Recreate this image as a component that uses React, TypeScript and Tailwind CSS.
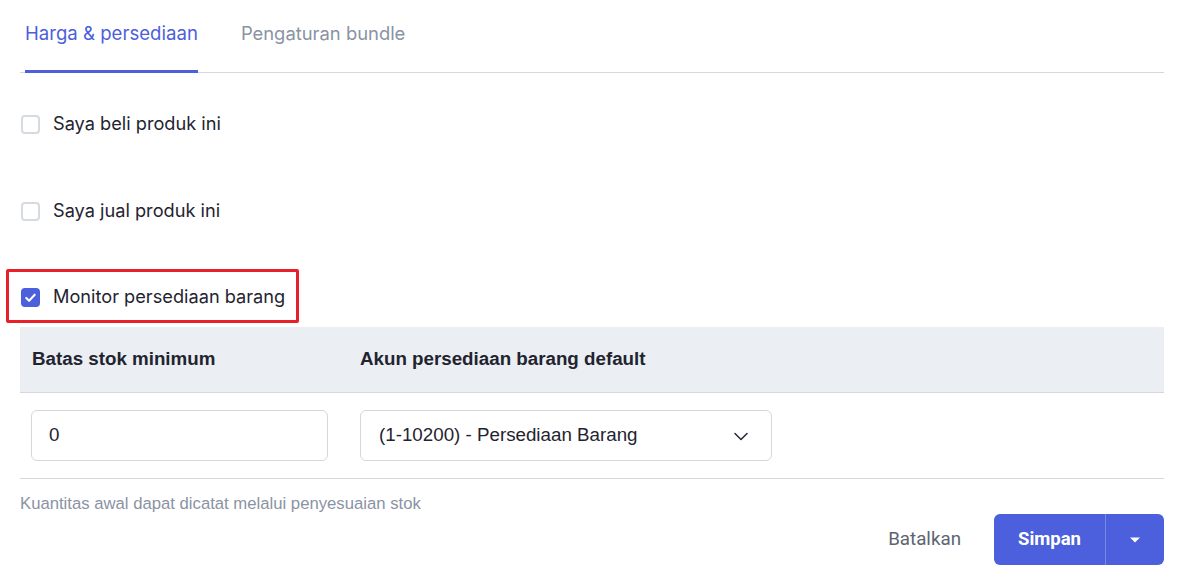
import React from "react";

const roboto = { fontFamily: "Roboto, 'Liberation Sans', Arial, sans-serif" };
const inter = { fontFamily: "Inter, Roboto, 'Liberation Sans', Arial, sans-serif" };
const arial = { fontFamily: "'Liberation Sans', Arial, sans-serif" };

function Box({ checked }: { checked?: boolean }) {
  if (checked) {
    return (
      <span className="flex h-[19px] w-[19px] shrink-0 items-center justify-center rounded-[4px] bg-[#4c5fdc]">
        <svg width="15" height="15" viewBox="0 0 16 16" fill="none">
          <path d="M3.5 8.5l3 3 6-6.5" stroke="#fff" strokeWidth="2.2" strokeLinecap="round" strokeLinejoin="round" />
        </svg>
      </span>
    );
  }
  return <span className="block h-[19px] w-[19px] shrink-0 rounded-[4px] border-2 border-[#d6dbe2] bg-white" />;
}

export default function App() {
  return (
    <div className="min-h-[586px] w-[1180px] bg-white pl-[20px] pr-[16px] text-[#1f2430]" style={roboto}>
      {/* Tabs */}
      <div className="flex h-[73px] gap-[43px] border-b border-[#d3d7de] pl-[5px]" style={inter}>
        <div className="relative flex h-full items-start pt-[21px] text-[18.6px] leading-[24px] text-[#4c5fdc]">
          Harga &amp; persediaan
          <span className="absolute bottom-[-1px] left-0 right-0 h-[3px] bg-[#4c5fdc]" />
        </div>
        <div className="flex h-full items-start pt-[21px] text-[18.4px] leading-[24px] text-[#8a93a3]">Pengaturan bundle</div>
      </div>

      {/* Options */}
      <div className="flex flex-col pt-[31px]" style={inter}>
        <label className="flex h-[40px] items-center gap-[13px] pl-[1px] text-[18.2px]">
          <Box />
          <span>Saya beli produk ini</span>
        </label>
        <label className="mt-[47px] flex h-[40px] items-center gap-[13px] pl-[1px] text-[18.2px]">
          <Box />
          <span>Saya jual produk ini</span>
        </label>
        <div className="relative mt-[46px] flex h-[40px] items-center gap-[13px] pl-[1px] text-[18.2px]">
          <Box checked />
          <span>Monitor persediaan barang</span>
          <span className="pointer-events-none absolute left-[-14px] top-[-8px] h-[54px] w-[293px] rounded-[2px] border-[3px] border-[#e8202a]" />
        </div>
      </div>

      {/* Table */}
      <div className="mt-[10px]">
        <div className="flex h-[66px] items-center border-b border-[#d3d7de] bg-[#ebeef2] text-[18.75px] font-bold text-[#1f2430]" style={arial}>
          <div className="w-[328px] pl-[12px]">Batas stok minimum</div>
          <div className="pl-[12px]">Akun persediaan barang default</div>
        </div>
        <div className="flex h-[86px] items-center border-b border-[#d3d7de]" style={arial}>
          <div className="w-[328px] pl-[11px]">
            <div className="flex h-[51px] w-[297px] items-center rounded-[6px] border border-[#d3d7de] px-[17px] text-[18.75px]">0</div>
          </div>
          <div className="pl-[12px]">
            <div className="flex h-[51px] w-[412px] items-center justify-between rounded-[6px] border border-[#d3d7de] pl-[18px] pr-[22px] text-[18.75px]">
              <span>(1-10200) - Persediaan Barang</span>
              <svg width="16" height="16" viewBox="0 0 16 16" fill="none">
                <path d="M2 5.5l6 6 6-6" stroke="#2a2f3a" strokeWidth="1.6" strokeLinecap="round" strokeLinejoin="round" />
              </svg>
            </div>
          </div>
        </div>
      </div>

      <div className="mt-[15px] text-[16.7px] leading-[20px] text-[#8a93a3]" style={arial}>
        Kuantitas awal dapat dicatat melalui penyesuaian stok
      </div>

      <div className="flex items-center justify-end">
        <span className="mr-[33px] text-[18.75px] text-[#5d6470]">Batalkan</span>
        <div className="flex h-[51px] overflow-hidden rounded-[6px] bg-[#4c5fdc] text-white">
          <div className="flex w-[111px] items-center justify-center text-[18.5px] font-bold">Simpan</div>
          <div className="w-px bg-[#7b89e6]" />
          <div className="flex w-[58px] items-center justify-center">
            <svg width="12" height="8" viewBox="0 0 12 8">
              <path d="M1 1.5h10L6 6.5z" fill="#fff" />
            </svg>
          </div>
        </div>
      </div>
    </div>
  );
}
